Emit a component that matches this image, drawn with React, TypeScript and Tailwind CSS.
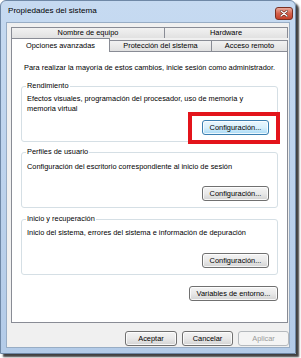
import React from "react"

const font = { fontFamily: '"Liberation Sans", Arial, sans-serif' }

function WinButton({
  label,
  width,
  focused = false,
  disabled = false,
}: {
  label: string
  width: string
  focused?: boolean
  disabled?: boolean
}) {
  const look = disabled
    ? "border-[#b5b9bd] bg-[#f4f4f4] text-[#9a9a9a]"
    : focused
      ? "border-[#3c7fb1] bg-gradient-to-b from-[#eaf6fd] via-[#d9f0fc] to-[#a7d9f5] text-black shadow-[inset_0_0_0_1px_rgba(255,255,255,0.8)]"
      : "border-[#707070] bg-gradient-to-b from-[#f4f4f4] via-[#e9e9e9] to-[#d3d3d3] text-black shadow-[inset_0_0_0_1px_rgba(255,255,255,0.8)]"
  return (
    <div
      className={`${width} flex h-[15px] items-center justify-center rounded-[3px] border text-[7.4px] leading-none ${look}`}
    >
      {label}
    </div>
  )
}

function GroupBox({
  title,
  lines,
  pt,
  focused = false,
}: {
  title: string
  lines: string[]
  pt: string
  focused?: boolean
}) {
  return (
    <fieldset className="rounded-[3px] border border-[#d5dfe5]">
      <legend className="ml-[4px] px-[1px] text-[7.4px] leading-[10px] text-black">
        {title}
      </legend>
      <div className={`flex h-[50px] flex-col pb-[6px] pl-[5px] pr-[8px] ${pt}`}>
        {lines.map((line) => (
          <p key={line} className="text-[7.4px] leading-[10px] text-black">
            {line}
          </p>
        ))}
        <div className="mt-auto flex justify-end">
          <WinButton label="Configuración..." width="w-[67px]" focused={focused} />
        </div>
      </div>
    </fieldset>
  )
}

export default function App() {
  return (
    <div className="relative h-[358px] w-[301px] bg-white" style={font}>
      {/* Window */}
      <div className="flex h-[354px] w-[296px] flex-col rounded-t-[6px] border border-[#6f88a6] bg-gradient-to-b from-[#c6daf1] to-[#b3cbe8] shadow-[3px_3px_2px_rgba(0,0,0,0.75)]">
        {/* Title bar */}
        <div className="flex h-[21px] items-center justify-between pl-[7px] pr-[2px]">
          <span className="text-[8.1px] leading-none text-black">
            Propiedades del sistema
          </span>
          <div className="mt-[3px] flex h-[13px] w-[18px] items-center justify-center rounded-[3px] border border-[#7a3022] bg-gradient-to-b from-[#e9a99b] via-[#d4614c] to-[#c5402a]">
            <svg width="8" height="7" viewBox="0 0 8 7">
              <path d="M1 1 L7 6 M7 1 L1 6" stroke="#5a1b12" strokeWidth="2.4" strokeLinecap="round" />
              <path d="M1 1 L7 6 M7 1 L1 6" stroke="#ffffff" strokeWidth="1.3" strokeLinecap="round" />
            </svg>
          </div>
        </div>

        {/* Client area */}
        <div className="mx-[5px] flex h-[326px] flex-col border border-[#98adc5] bg-[#f0f0f0] pl-[4px] pr-[1px] pt-[4px]">
          {/* Tabs row 1 */}
          <div className="flex h-[11px] w-[277px]">
            <div className="flex w-[154px] items-center justify-center border border-b-0 border-[#898c95] bg-gradient-to-b from-[#f2f2f2] to-[#e1e1e1] text-[7.4px] leading-none text-black">
              Nombre de equipo
            </div>
            <div className="flex flex-1 items-center justify-center border border-b-0 border-l-0 border-[#898c95] bg-gradient-to-b from-[#f2f2f2] to-[#e1e1e1] text-[7.4px] leading-none text-black">
              Hardware
            </div>
          </div>
          {/* Tabs row 2 */}
          <div className="relative z-10 flex h-[13px] w-[277px] items-end">
            <div className="-mb-[1px] flex h-[14px] w-[99px] items-start justify-center border border-b-0 border-[#898c95] bg-white pt-[3px] text-[7.4px] leading-none text-black">
              Opciones avanzadas
            </div>
            <div className="flex h-[11px] w-[102px] items-center justify-center border border-b-0 border-l-0 border-[#898c95] bg-gradient-to-b from-[#f2f2f2] to-[#e1e1e1] text-[7.4px] leading-none text-black">
              Protección del sistema
            </div>
            <div className="flex h-[11px] flex-1 items-center justify-center border border-b-0 border-l-0 border-[#898c95] bg-gradient-to-b from-[#f2f2f2] to-[#e1e1e1] text-[7.4px] leading-none text-black">
              Acceso remoto
            </div>
          </div>

          {/* Tab panel */}
          <div className="flex h-[272px] w-[277px] flex-col border border-[#898c95] bg-white px-[9px] pt-[11px]">
            <p className="ml-[3px] text-[7.4px] leading-[10px] text-black">
              Para realizar la mayoría de estos cambios, inicie sesión como administrador.
            </p>
            <div className="mt-[8px]">
              <GroupBox
                title="Rendimiento"
                pt="pt-[3px]"
                focused
                lines={[
                  "Efectos visuales, programación del procesador, uso de memoria y",
                  "memoria virtual",
                ]}
              />
            </div>
            <div className="mt-[5px]">
              <GroupBox
                title="Perfiles de usuario"
                pt="pt-[5px]"
                lines={["Configuración del escritorio correspondiente al inicio de sesión"]}
              />
            </div>
            <div className="mt-[6px]">
              <GroupBox
                title="Inicio y recuperación"
                pt="pt-[4px]"
                lines={["Inicio del sistema, errores del sistema e información de depuración"]}
              />
            </div>
            <div className="mt-[11px] flex justify-end">
              <WinButton label="Variables de entorno..." width="w-[89px]" />
            </div>
          </div>

          {/* Dialog buttons */}
          <div className="mt-[8px] flex w-[278px] justify-end gap-[5px]">
            <WinButton label="Aceptar" width="w-[52px]" />
            <WinButton label="Cancelar" width="w-[51px]" />
            <WinButton label="Aplicar" width="w-[51px]" disabled />
          </div>
        </div>
      </div>

      {/* Red highlight annotation */}
      <div className="absolute left-[188px] top-[112px] h-[32px] w-[92px] border-4 border-[#e3141b]" />
    </div>
  )
}
